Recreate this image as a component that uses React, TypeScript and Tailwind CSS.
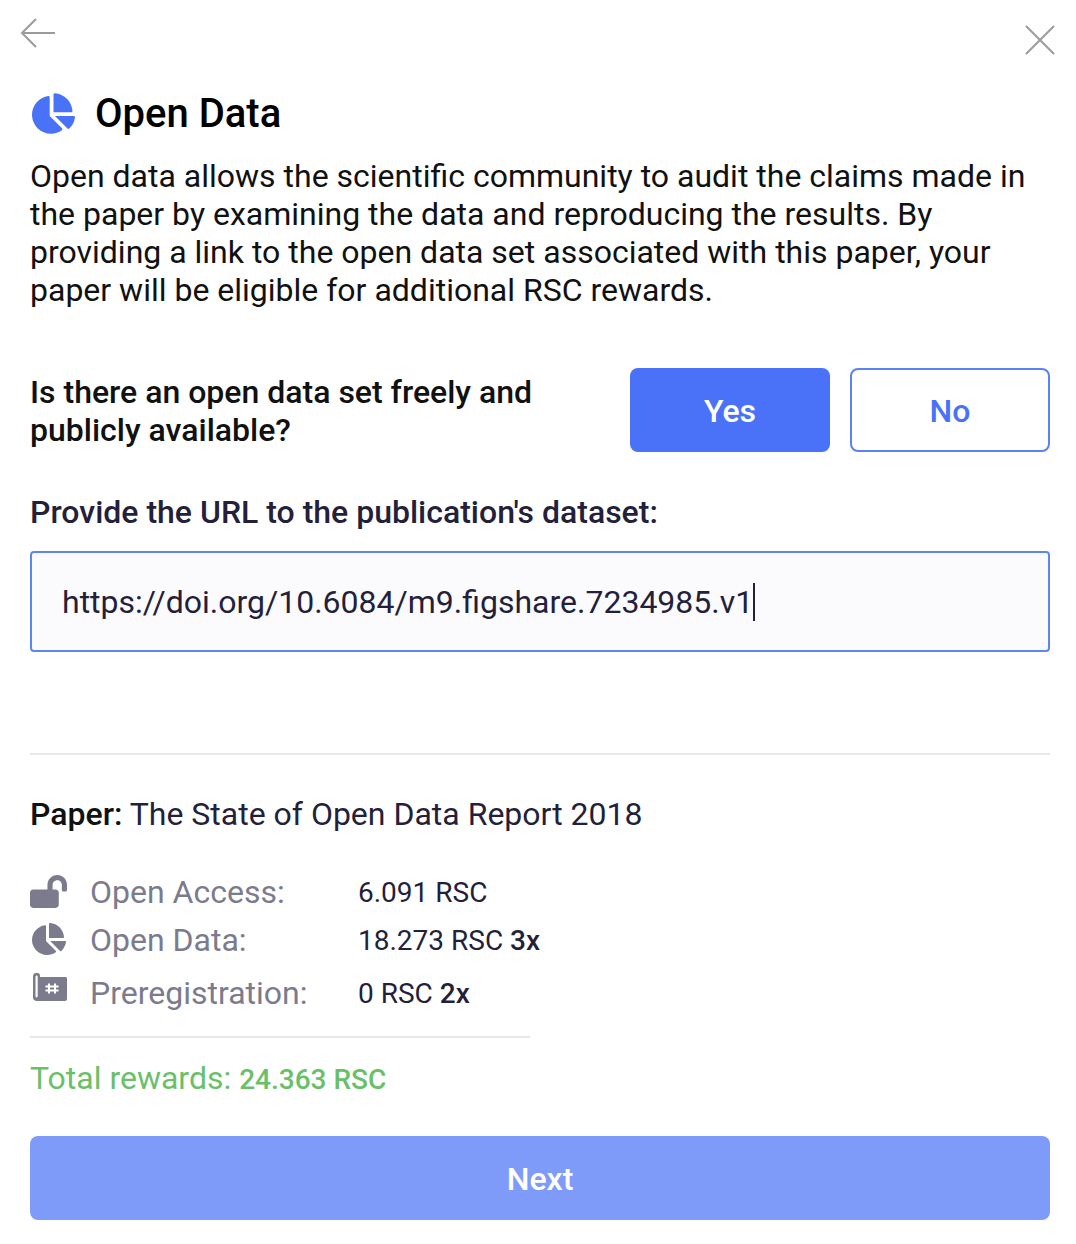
import React from 'react';
import { FaChartPie, FaLockOpen } from 'react-icons/fa';

function FaxIcon() {
  return (
    <svg width="36" height="30" viewBox="0 0 36 30" className="text-[#7c7b8d]">
      <path
        fill="currentColor"
        fillRule="evenodd"
        d="M2 4.500C2 2.500 3.200 1 5 1h1.500C8 1 9 2.300 9 4v1h25.500c.8 0 1.500.7 1.500 1.500V27c0 1.100-.9 2-2 2H6c-2.400 0-4-1.300-4-3.500zM4.500 5v19c0 .8.4 1.400 1.100 1.400S6.700 24.800 6.700 24V5c0-1-.4-1.600-1.100-1.600S4.500 4 4.500 5z"
      />
      <path stroke="#fff" strokeWidth="2" d="M18 11.500v10M24 11.500v10M14.500 14.500h13M14.500 18.500h13" />
    </svg>
  );
}

function RewardRow({ icon, label, value, bonus, className }: { icon: React.ReactNode; label: string; value: string; bonus?: string; className: string }) {
  return (
    <div className={`flex items-center ${className}`}>
      <div className="w-[60px] flex shrink-0">{icon}</div>
      <div className="w-[268px] -mt-[2px] text-[32px] leading-[36px] text-[#7c7b8d]">{label}</div>
      <div className="text-[28px] text-[#241f3a]">
        {value} {bonus && <span className="font-medium">{bonus}</span>}
      </div>
    </div>
  );
}

export default function App() {
  return (
    <div className="w-[1076px] h-[1244px] bg-white pl-[30px] pr-[26px] font-['Roboto',sans-serif] overflow-hidden">
      <div className="flex justify-between items-start h-[92px] -ml-[10px]">
        <svg width="36" height="32" viewBox="0 0 36 32" className="mt-[17px]" fill="none" stroke="#9b9b9b" strokeWidth="2">
          <path d="M35 16H2M16 2 2 16l14 14" />
        </svg>
        <svg width="30" height="30" viewBox="0 0 30 30" className="mt-[25px] mr-[-5px]" fill="none" stroke="#9b9b9b" strokeWidth="2">
          <path d="M1 1l28 28M29 1 1 29" />
        </svg>
      </div>

      <div className="flex items-center h-[44px]">
        <FaChartPie className="text-[#4a72f8] ml-[2px] -mt-[2px]" size={43} />
        <h1 className="ml-[20px] text-[40px] font-medium text-black leading-[44px]">Open Data</h1>
      </div>

      <p className="mt-[21px] text-[32px] leading-[38px] text-[#111]">
        Open data allows the scientific community to audit the claims made in the paper by examining the data and reproducing the results. By providing a link to the open data set associated with this paper, your paper will be eligible for additional RSC rewards.
      </p>

      <div className="mt-[59px] flex justify-between items-start h-[84px]">
        <div className="w-[540px] mt-[5px] text-[32px] leading-[38px] font-medium text-[#111]">
          Is there an open data set freely and publicly available?
        </div>
        <div className="flex gap-[20px]">
          <button className="w-[200px] h-[84px] pt-[2px] rounded-[8px] bg-[#4a72f8] text-white text-[32px] font-medium">Yes</button>
          <button className="w-[200px] h-[84px] pt-[2px] rounded-[8px] border-2 border-[#5c80f6] bg-white text-[#4a72f8] text-[32px] font-medium">No</button>
        </div>
      </div>

      <div className="mt-[41px] text-[32px] leading-[38px] font-medium text-[#241f3a]">Provide the URL to the publication's dataset:</div>

      <div className="mt-[20px] h-[101px] pt-[1px] rounded-[4px] border-2 border-[#5c87ee] bg-[#fbfbfd] px-[30px] flex items-center text-[32px] text-[#241f3a]">
        https://doi.org/10.6084/m9.figshare.7234985.v1
        <span className="w-[2px] h-[38px] bg-[#241f3a]" />
      </div>

      <div className="mt-[101px] h-[2px] bg-[#e8e8ea]" />

      <div className="mt-[40px] text-[32px] leading-[38px] text-[#241f3a]">
        <span className="font-medium text-[#111]">Paper:</span> The State of Open Data Report 2018
      </div>

      <RewardRow className="mt-[41px] h-[38px]" icon={<FaLockOpen className="text-[#7c7b8d] -mt-[4px]" size={37} />} label="Open Access:" value="6.091 RSC" />
      <RewardRow className="mt-[10px] h-[38px]" icon={<FaChartPie className="text-[#7c7b8d] ml-[2px] -mt-[5px]" size={34} />} label="Open Data:" value="18.273 RSC" bonus="3x" />
      <RewardRow className="mt-[15px] h-[38px]" icon={<div className="-mt-[15px] ml-[1px]"><FaxIcon /></div>} label="Preregistration:" value="0 RSC" bonus="2x" />

      <div className="mt-[23px] w-[500px] h-[2px] bg-[#e8e8ea]" />

      <div className="mt-[21px] text-[32px] leading-[38px] text-[#6abf69]">
        Total rewards: <span className="font-medium text-[28px]">24.363 RSC</span>
      </div>

      <button className="mt-[37px] pt-[1px] w-full h-[84px] rounded-[8px] bg-[#7f9bf9] text-white text-[32px] font-medium">Next</button>
    </div>
  );
}
